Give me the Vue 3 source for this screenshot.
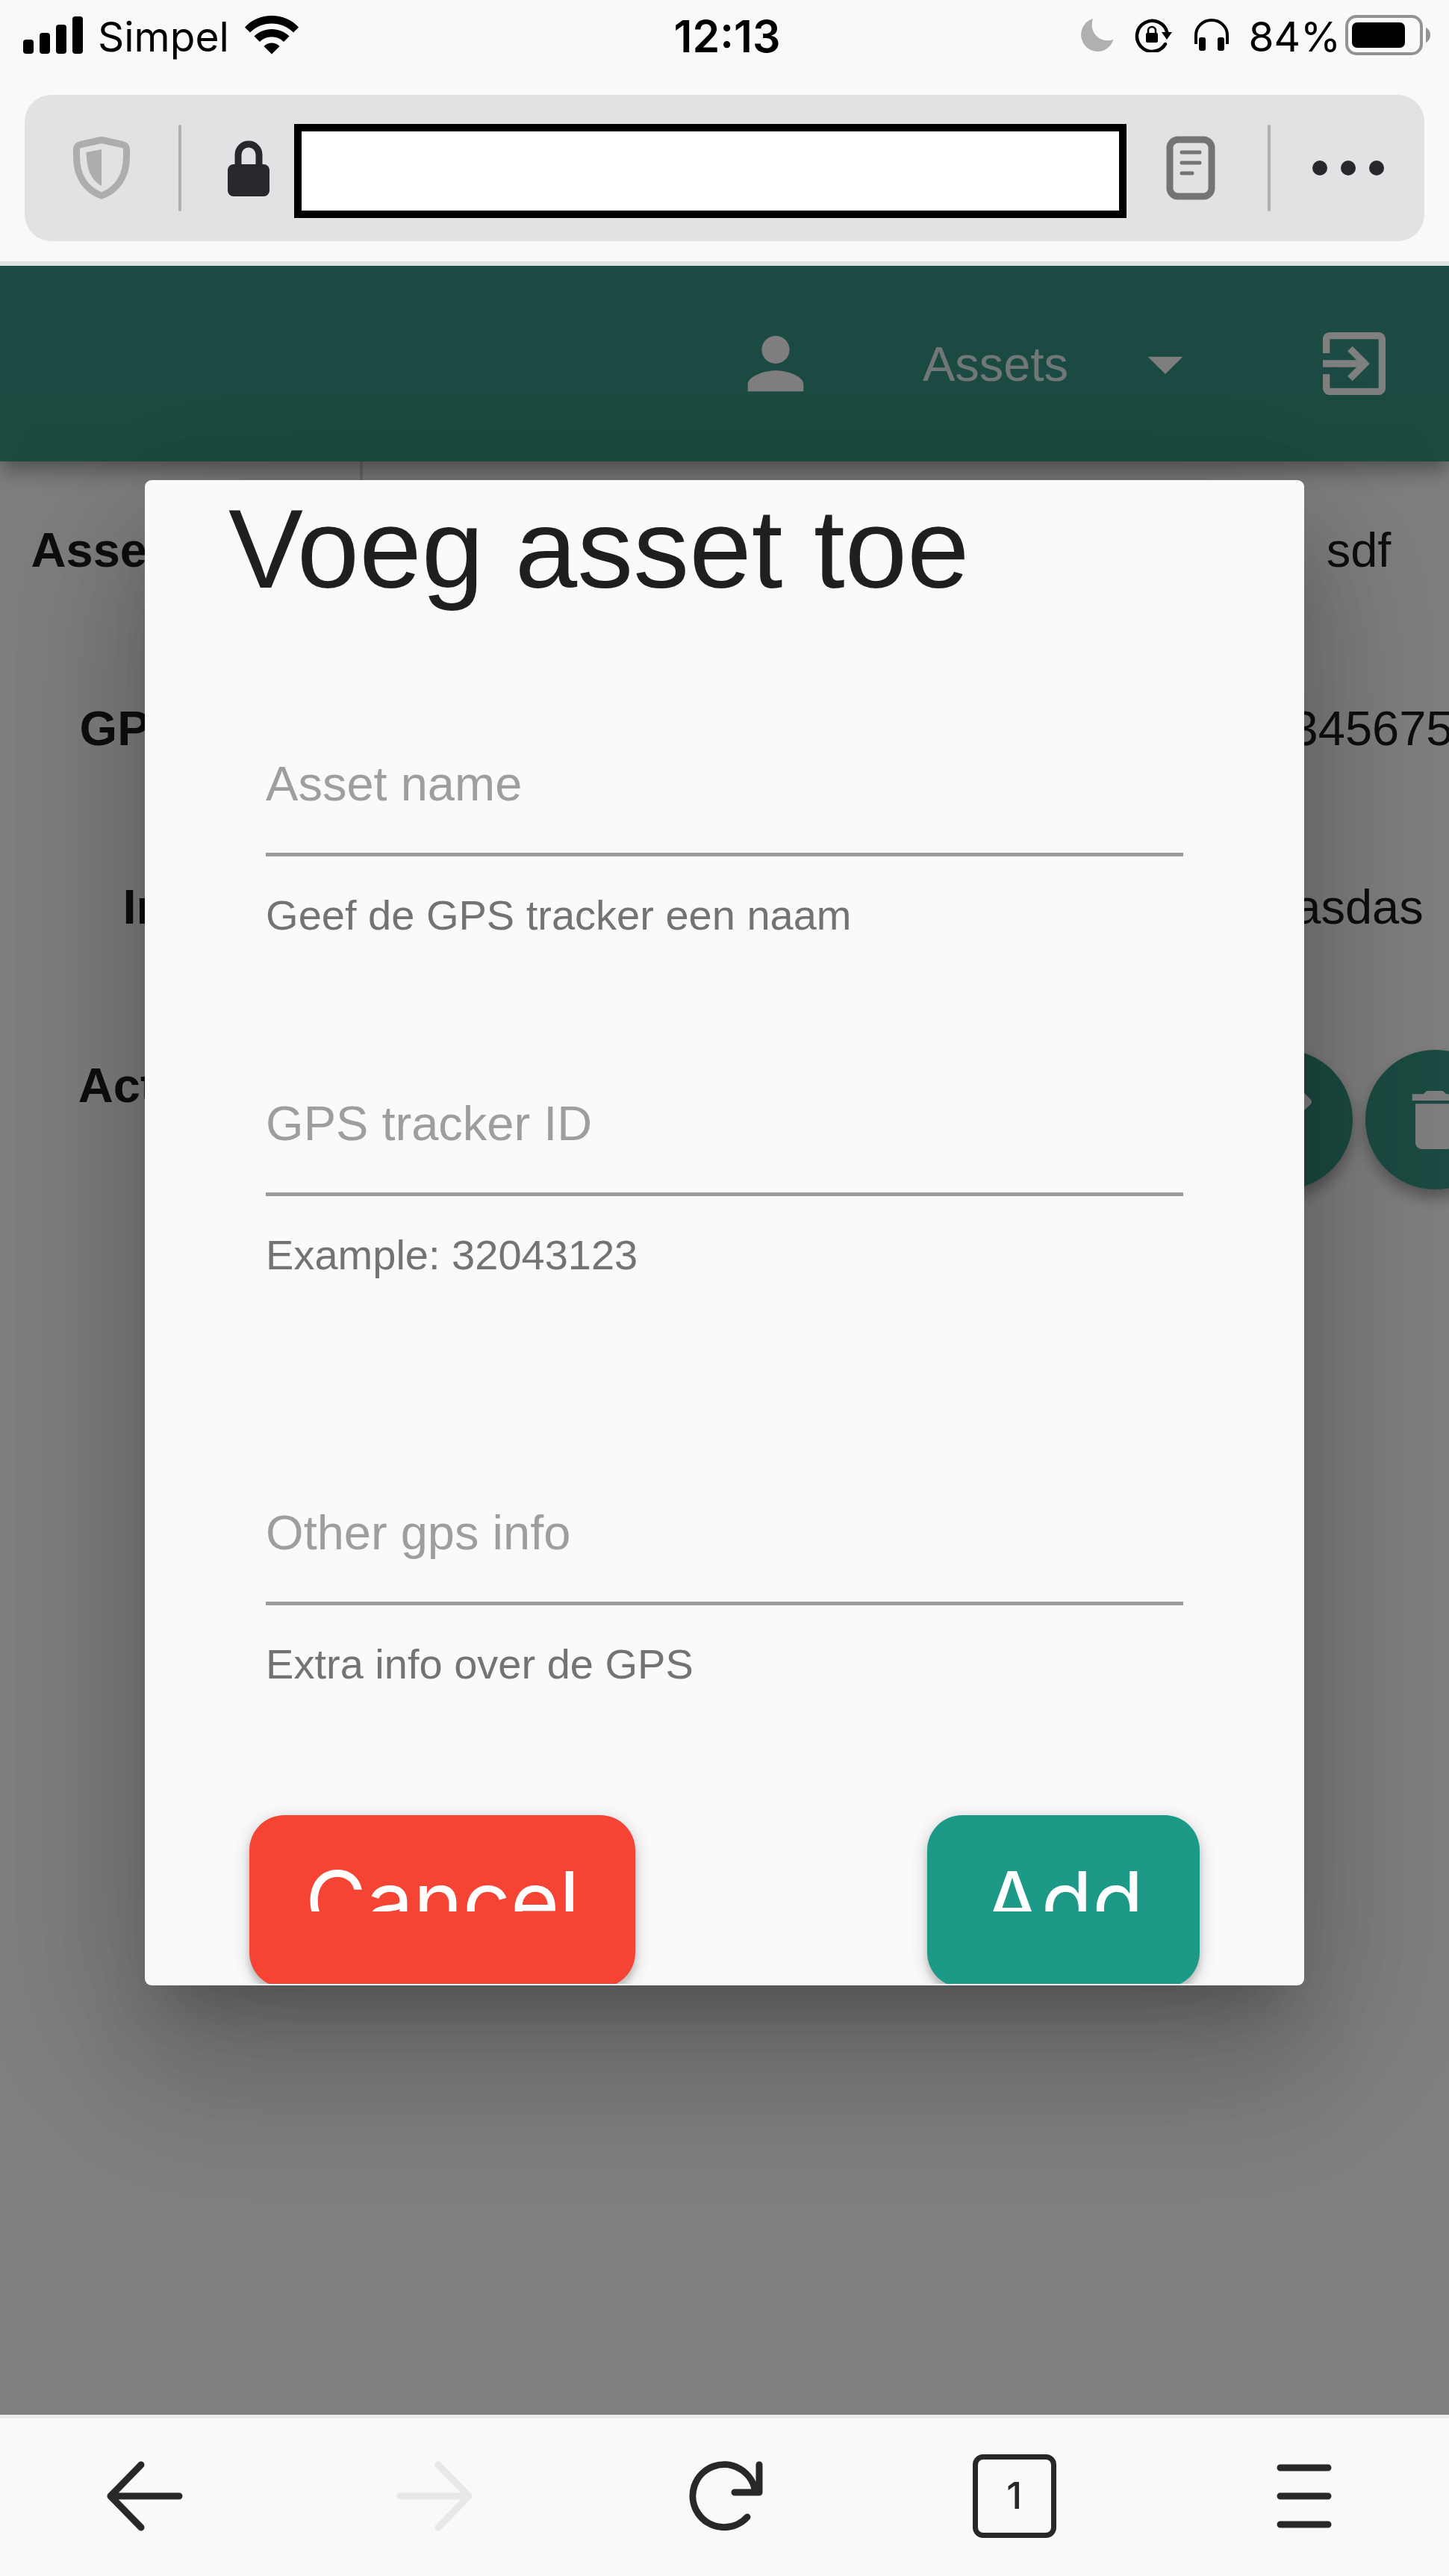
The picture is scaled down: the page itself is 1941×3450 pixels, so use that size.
<script setup>
import { ref } from 'vue'

const address = ref('')
const page = ref('Assets')

const rows = [
  { label: 'Asset name', value: 'sdf' },
  { label: 'GPS nr.', value: '2345675' },
  { label: 'Info', value: 'asdas' },
]

const fields = ref([
  { id: 'asset-name', label: 'Asset name', hint: 'Geef de GPS tracker een naam', value: '' },
  { id: 'tracker-id', label: 'GPS tracker ID', hint: 'Example: 32043123', value: '' },
  { id: 'gps-info', label: 'Other gps info', hint: 'Extra info over de GPS', value: '', spaced: true },
])
</script>

<template>
  <div class="screen">
    <header class="chrome">
      <div class="status">
        <div class="status-left">
          <svg width="80" height="50" viewBox="0 0 80 50" aria-hidden="true">
            <rect x="0" y="31" width="14" height="19" rx="4" />
            <rect x="22" y="22" width="14" height="28" rx="4" />
            <rect x="44" y="11" width="14" height="39" rx="4" />
            <rect x="66" y="0" width="14" height="50" rx="4" />
          </svg>
          <span class="carrier">Simpel</span>
          <svg width="72" height="52" viewBox="0 0 72 52" aria-hidden="true">
            <path d="M36 0C22 0 9 5.500 0 15.500l7 7C15 14.500 25 10.500 36 10.500s21 4 29 12l7-7C63 5.500 50 0 36 0z" />
            <path d="M36 18c-9 0-17 3.500-23.500 9.500l7.500 7.500c4.500-4.500 10-6.500 16-6.500s11.500 2 16 6.500l7.500-7.500C53 21.500 45 18 36 18z" />
            <path d="M36 36.500c-4 0-8 1.500-10.500 4.500L36 51.500 46.500 41C44 38 40 36.500 36 36.500z" />
          </svg>
        </div>
        <time class="clock">12:13</time>
        <div class="status-right">
          <svg class="moon" width="45" height="44" viewBox="0 0 45 44" aria-hidden="true">
            <path d="M17 0C11 18 26 34 44.500 28C41 38 33 44 23 44A22.500 22.500 0 0 1 17 0z" fill="#b0b0b1" />
          </svg>
          <svg class="rotation" width="50" height="46" viewBox="0 0 50 46" aria-hidden="true">
            <path d="M41 35A20.500 20.500 0 1 1 43.500 20" fill="none" stroke="#000" stroke-width="4.500" stroke-linecap="round" />
            <path d="M36 19h14l-7 10z" />
            <rect x="15" y="20" width="16" height="13" rx="2" />
            <path d="M18 21v-4a5 5 0 0 1 10 0v4" fill="none" stroke="#000" stroke-width="2.500" />
          </svg>
          <svg class="phones" width="46" height="44" viewBox="0 0 46 44" aria-hidden="true">
            <path d="M2 34V22a21 20 0 0 1 42 0v12" fill="none" stroke="#000" stroke-width="4" />
            <rect x="6" y="25" width="9" height="18" rx="3" />
            <rect x="31" y="25" width="9" height="18" rx="3" />
          </svg>
          <span class="percent">84%</span>
          <svg class="battery" width="115" height="54" viewBox="0 0 115 54" aria-hidden="true">
            <rect x="2" y="2" width="100" height="50" rx="13" fill="none" stroke="#939394" stroke-width="4" />
            <rect x="9" y="10" width="71" height="34" rx="7" />
            <path d="M108 17c4 2 6 6 6 10s-2 8-6 10z" fill="#939394" />
          </svg>
        </div>
      </div>

      <div class="address-bar">
        <button class="plain shield" type="button" aria-label="Tracking protection">
          <svg width="76" height="84" viewBox="0 0 76 84">
            <path d="M38 4.500 66 10.500Q71.500 12 71.500 17V27C71.500 52 60 71 38 79C16 71 4.500 52 4.500 27V17Q4.500 12 10 10.500z" fill="none" stroke="#adadae" stroke-width="9" stroke-linejoin="round" />
            <path d="M38 17v49C24 58 18 44 17.500 21z" fill="#adadae" />
          </svg>
        </button>
        <i class="divider"></i>
        <svg class="lock" width="56" height="76" viewBox="0 0 56 76" aria-hidden="true">
          <path d="M14 38V20a14 14 0 0 1 28 0v18" fill="none" stroke="#28272d" stroke-width="9" />
          <rect x="0" y="33" width="56" height="43" rx="8" fill="#28272d" />
        </svg>
        <input v-model="address" class="address" type="text" aria-label="Address" />
        <button class="plain reader" type="button" aria-label="Reader view">
          <svg width="66" height="86" viewBox="0 0 66 86">
            <rect x="5" y="5" width="56" height="76" rx="11" fill="none" stroke="#747475" stroke-width="9" />
            <path d="M21 22h24M21 36h24M21 50h14" fill="none" stroke="#747475" stroke-width="5" stroke-linecap="round" />
          </svg>
        </button>
        <i class="divider"></i>
        <button class="plain dots" type="button" aria-label="Page actions">
          <svg width="96" height="20" viewBox="0 0 96 20" fill="#28272d">
            <circle cx="10" cy="10" r="10" />
            <circle cx="48" cy="10" r="10" />
            <circle cx="86" cy="10" r="10" />
          </svg>
        </button>
      </div>
    </header>

    <main class="app">
      <nav class="toolbar">
        <button class="plain" type="button" aria-label="Account">
          <svg class="icon" viewBox="0 0 24 24"><path d="M12 12c2.210 0 4-1.790 4-4s-1.790-4-4-4-4 1.790-4 4 1.790 4 4 4zm0 2c-2.670 0-8 1.340-8 4v2h16v-2c0-2.660-5.330-4-8-4z" /></svg>
        </button>
        <label class="page-picker">
          <select v-model="page" aria-label="Page">
            <option>Assets</option>
          </select>
          <svg class="icon" viewBox="0 0 24 24"><path d="M7 10l5 5 5-5z" /></svg>
        </label>
        <button class="plain" type="button" aria-label="Log out">
          <svg class="icon" viewBox="0 0 24 24"><path d="M10.090 15.590L11.500 17l5-5-5-5-1.410 1.410L12.670 11H3v2h9.670l-2.580 2.590zM19 3H5c-1.110 0-2 .9-2 2v4h2V5h14v14H5v-4H3v4c0 1.100.89 2 2 2h14c1.100 0 2-.9 2-2V5c0-1.100-.9-2-2-2z" /></svg>
        </button>
      </nav>

      <table class="details">
        <tbody>
          <tr v-for="row in rows" :key="row.label">
            <th scope="row">{{ row.label }}</th>
            <td>{{ row.value }}</td>
          </tr>
          <tr>
            <th scope="row">Actions</th>
            <td class="actions-cell">
              <button class="fab" type="button" aria-label="Edit">
                <svg viewBox="0 0 24 24"><path d="M3 17.250V21h3.750L17.810 9.940l-3.750-3.750L3 17.250zM20.710 7.040c.39-.39.39-1.020 0-1.410l-2.340-2.340c-.39-.39-1.020-.39-1.410 0l-1.830 1.830 3.750 3.750 1.830-1.830z" /></svg>
              </button>
              <button class="fab" type="button" aria-label="Delete">
                <svg viewBox="0 0 24 24"><path d="M6 19c0 1.100.9 2 2 2h8c1.100 0 2-.9 2-2V7H6v12zM19 4h-3.500l-1-1h-5l-1 1H5v2h14V4z" /></svg>
              </button>
            </td>
          </tr>
        </tbody>
      </table>

      <div class="backdrop">
        <form class="dialog" role="dialog" aria-labelledby="dialog-title" @submit.prevent>
          <h1 id="dialog-title">Voeg asset toe</h1>
          <div class="fields">
            <div v-for="field in fields" :key="field.id" class="field" :class="{ spaced: field.spaced }">
              <div class="control">
                <input :id="field.id" v-model="field.value" type="text" :aria-describedby="field.id + '-hint'" />
                <label v-show="!field.value" :for="field.id">{{ field.label }}</label>
              </div>
              <p :id="field.id + '-hint'">{{ field.hint }}</p>
            </div>
          </div>
          <div class="dialog-actions">
            <button class="action cancel" type="button"><span>Cancel</span></button>
            <button class="action add" type="submit"><span>Add</span></button>
          </div>
        </form>
      </div>
    </main>

    <footer class="browser-nav">
      <button class="plain" type="button" aria-label="Back">
        <svg width="104" height="96" viewBox="0 0 104 96"><path d="M98 48H6M47 6 6 48l41 42" /></svg>
      </button>
      <button class="plain forward" type="button" aria-label="Forward" disabled>
        <svg width="104" height="96" viewBox="0 0 104 96"><path d="M6 48h92M57 6l41 42-41 42" /></svg>
      </button>
      <button class="plain" type="button" aria-label="Reload">
        <svg width="104" height="96" viewBox="0 0 104 96"><path d="M83 76A42 42 0 1 1 93.700 43M99 6v37H66" /></svg>
      </button>
      <button class="plain" type="button" aria-label="Tabs"><span class="tab-count">1</span></button>
      <button class="plain" type="button" aria-label="Menu">
        <svg width="74" height="86" viewBox="0 0 74 86"><path d="M5 5h64M5 43h64M5 81h64" /></svg>
      </button>
    </footer>
  </div>
</template>

<style>
body {
  margin: 0;
}
</style>

<style scoped>
.screen {
  display: flex;
  flex-direction: column;
  min-height: 100vh;
  overflow: hidden;
  background: #f9f9fa;
  font-family: "Liberation Sans", Arial, sans-serif;
}

.plain {
  display: flex;
  align-items: center;
  justify-content: center;
  padding: 0;
  border: 0;
  background: none;
  color: inherit;
}

svg {
  display: block;
  flex: none;
}

/* Browser chrome */
.chrome {
  padding-bottom: 27px;
  border-bottom: 6px solid #e0e4e4;
}

.status {
  display: grid;
  grid-template-columns: 1fr auto 1fr;
  align-items: center;
  height: 94px;
  padding: 0 24px 0 31px;
  font: 400 55px/64px Inter, sans-serif;
}

.status-left,
.status-right {
  display: flex;
  align-items: center;
}

.status-right {
  justify-content: flex-end;
}

.carrier {
  margin: 4px 21px 0 20px;
}

.clock {
  margin-top: 4px;
  font-size: 59px;
  font-weight: 600;
}

.percent {
  margin: 4px 6px 0 26px;
}

.rotation {
  margin: 0 30px 0 28px;
}

.address-bar {
  display: flex;
  align-items: center;
  box-sizing: border-box;
  height: 196px;
  margin: 33px 33px 0;
  padding: 0 54px 0 65px;
  border-radius: 36px;
  background: #e2e2e4;
}

.divider {
  flex: none;
  width: 4px;
  height: 116px;
  border-radius: 2px;
  background: #b0b0b2;
}

.shield {
  margin-right: 65px;
}

.lock {
  margin: 0 33px 0 62px;
}

.address {
  box-sizing: border-box;
  flex: 1;
  min-width: 0;
  height: 126px;
  margin: 8px 0 0;
  padding: 0 20px;
  border: 10px solid #000;
  border-radius: 0;
  background: #fff;
  font: 400 55px/64px Inter, sans-serif;
}

.reader {
  margin: 0 70px 0 53px;
}

.dots {
  margin-left: 56px;
}

/* Web page */
.app {
  position: relative;
  flex: 1;
  overflow: hidden;
  background: #fff;
}

.toolbar {
  position: relative;
  display: flex;
  align-items: center;
  justify-content: flex-end;
  gap: 141px;
  height: 262px;
  padding-right: 71px;
  background: linear-gradient(#36968a, #389680);
  box-shadow: 0 9px 19px -5px rgba(0, 0, 0, 0.2), 0 19px 23px rgba(0, 0, 0, 0.14), 0 5px 47px rgba(0, 0, 0, 0.12);
  color: #fff;
}

.icon {
  width: 112px;
  height: 112px;
  fill: currentColor;
}

.page-picker {
  display: flex;
  align-items: center;
}

.page-picker select {
  width: 269px;
  padding: 0;
  border: 0;
  appearance: none;
  background: none;
  color: rgba(255, 255, 255, 0.87);
  font: 400 65px/75px "Liberation Sans", Arial, sans-serif;
}

.details {
  display: block;
  width: calc(100% + 80px);
  color: #1c1c1c;
  font-size: 65px;
  line-height: 75px;
}

.details tbody {
  display: block;
}

.details tr {
  display: flex;
  justify-content: space-between;
  height: 239px;
}

.details th {
  box-sizing: border-box;
  width: 486px;
  padding: 81px 34px 0 0;
  border-right: 4px solid #dadada;
  white-space: nowrap;
}

.details td {
  width: 402px;
  padding: 81px 0 0;
  text-align: center;
}

.details .actions-cell {
  display: flex;
  justify-content: center;
  gap: 17px;
  padding-top: 71px;
}

.fab {
  display: flex;
  flex: none;
  align-items: center;
  justify-content: center;
  width: 187px;
  height: 187px;
  padding: 0;
  border: 0;
  border-radius: 50%;
  background: #369684;
  box-shadow: 0 14px 23px -5px rgba(0, 0, 0, 0.2), 0 10px 20px rgba(0, 0, 0, 0.2);
}

.fab svg {
  width: 104px;
  height: 104px;
  fill: #fff;
}

/* Dialog */
.backdrop {
  position: absolute;
  inset: 0;
  display: flex;
  align-items: flex-start;
  justify-content: center;
  padding-top: 287px;
  background: rgba(0, 0, 0, 0.5);
}

.dialog {
  box-sizing: border-box;
  width: 80%;
  padding: 12px 0 2px;
  border-radius: 9px;
  background: #fafafa;
  box-shadow: 0 51px 70px -33px rgba(0, 0, 0, 0.2), 0 112px 177px 14px rgba(0, 0, 0, 0.14), 0 42px 215px 37px rgba(0, 0, 0, 0.12);
}

.dialog h1 {
  margin: 0 112px 197px;
  color: #1f1f1f;
  font-size: 150px;
  font-weight: 400;
  line-height: 160px;
}

.fields {
  display: flex;
  flex-direction: column;
  gap: 209px;
  padding: 0 162px;
}

.spaced {
  margin-top: 93px;
}

.control {
  display: grid;
  font-size: 65px;
  line-height: 75px;
}

.control input,
.control label {
  grid-area: 1 / 1;
  font: inherit;
}

.control input {
  box-sizing: border-box;
  width: 100%;
  height: 135px;
  padding: 0 0 55px;
  border: 0;
  border-bottom: 5px solid #9c9c9c;
  border-radius: 0;
  outline: 0;
  background: none;
  color: #1f1f1f;
}

.control label {
  justify-self: start;
  color: #9e9e9e;
}

.field p {
  margin: 47px 0 0;
  color: #737373;
  font-size: 56px;
  line-height: 64px;
}

/* The row is lower than its buttons and cuts off their bottom edge. */
.dialog-actions {
  display: flex;
  align-items: flex-start;
  justify-content: space-between;
  height: 242px;
  margin-top: 154px;
  padding: 0 140px;
  overflow: hidden;
}

.action {
  display: block;
  margin: 16px 0 0;
  padding: 59px 75px 102px;
  border: 0;
  border-radius: 47px;
  box-shadow: 0 5px 23px rgba(0, 0, 0, 0.2), 0 9px 9px rgba(0, 0, 0, 0.14);
  color: #fff;
  font: 400 112px/112px Inter, sans-serif;
}

.action span {
  display: block;
  height: 70px;
  overflow: hidden;
}

.cancel {
  background: #f54334;
}

.add {
  background: #1d9988;
}

/* Browser bottom bar */
.browser-nav {
  display: grid;
  grid-template-columns: repeat(5, 1fr);
  align-items: center;
  box-sizing: border-box;
  height: 216px;
  padding-bottom: 4px;
  border-top: 5px solid #ececec;
  color: #28282b;
}

.browser-nav svg {
  fill: none;
  stroke: currentColor;
  stroke-width: 9;
  stroke-linecap: round;
  stroke-linejoin: round;
}

.browser-nav .forward {
  color: #e8e8ea;
}

.tab-count {
  box-sizing: border-box;
  width: 112px;
  height: 112px;
  border: 7px solid #28282b;
  border-radius: 14px;
  font: 500 50px/96px Inter, sans-serif;
  text-align: center;
}
</style>
